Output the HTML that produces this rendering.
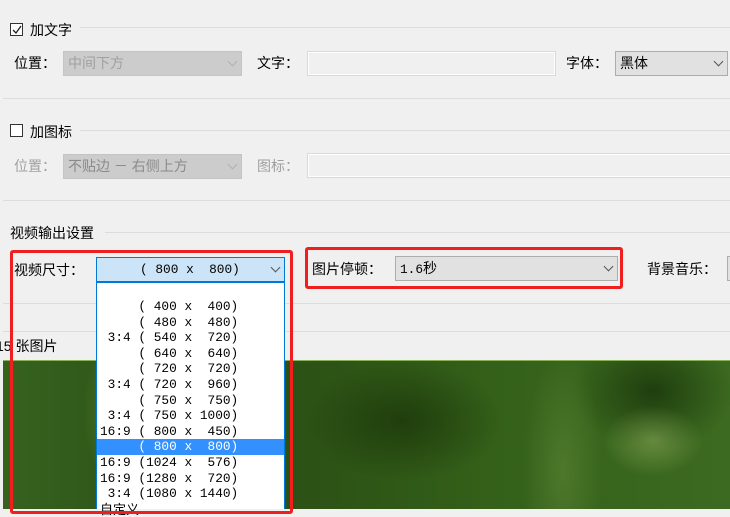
<!DOCTYPE html>
<html><head><meta charset="utf-8"><style>
*{margin:0;padding:0;box-sizing:border-box}
body{width:730px;height:509px;overflow:hidden;background:#f0f0f0;position:relative;font-family:"Liberation Sans","Noto Sans CJK SC",sans-serif;font-size:14px;color:#000}
.a{position:absolute}
.hl{position:absolute;height:1px;background:#dcdcdc}
.lbl{position:absolute;line-height:16px;white-space:nowrap}
.dis{color:#a0a0a0}
.cb{position:absolute;width:13px;height:13px;border:1px solid #333;background:#fff}
.combo{position:absolute;border:1px solid #adadad;background:#e1e1e1;line-height:23px;padding-left:4px;white-space:nowrap}
.arr{position:absolute;right:5px;width:7px;height:7px;border-right:1px solid #555;border-bottom:1px solid #555;transform:rotate(45deg);top:6px}
.mono{font-family:"Liberation Mono","Noto Sans CJK SC",monospace;font-size:12.8px}
.list div{height:15.6px;line-height:15.6px;white-space:pre;padding-left:3px}
</style></head><body>
<div class="hl" style="left:80px;top:27px;width:650px"></div>
<div class="cb" style="left:10px;top:23px"></div>
<svg class="a" style="left:10px;top:23px" width="14" height="14"><path d="M3 7 L6 10 L11 3" stroke="#222" stroke-width="1.3" fill="none"/></svg>
<div class="lbl" style="left:30px;top:22px">加文字</div>
<div class="lbl" style="left:14px;top:55px">位置：</div>
<div class="combo dis" style="left:63px;top:51px;width:179px;height:25px;background:#cccccc;border-color:#c4c4c4">中间下方<span class="arr" style="border-color:#b0b0b0"></span></div>
<div class="lbl" style="left:257px;top:55px">文字：</div>
<div class="a" style="left:307px;top:51px;width:249px;height:25px;border:1px solid #d9d9d9;background:#f0f0f0;box-shadow:inset 0 0 0 1px #fff"></div>
<div class="lbl" style="left:566px;top:55px">字体：</div>
<div class="combo" style="left:615px;top:51px;width:113px;height:25px">黑体<span class="arr"></span></div>
<div class="hl" style="left:3px;top:98px;width:727px"></div>
<div class="hl" style="left:80px;top:130px;width:650px"></div>
<div class="cb" style="left:10px;top:124px"></div>
<div class="lbl" style="left:30px;top:124px">加图标</div>
<div class="lbl dis" style="left:14px;top:158px">位置：</div>
<div class="combo dis" style="left:63px;top:154px;width:179px;height:25px;background:#cccccc;border-color:#c4c4c4;color:#8a8a8a">不贴边 － 右侧上方<span class="arr" style="border-color:#b0b0b0"></span></div>
<div class="lbl dis" style="left:257px;top:158px">图标：</div>
<div class="a" style="left:307px;top:153px;width:430px;height:25px;border:1px solid #d9d9d9;background:#f0f0f0;box-shadow:inset 0 0 0 1px #fff"></div>
<div class="hl" style="left:3px;top:200px;width:727px"></div>
<div class="hl" style="left:105px;top:232px;width:625px"></div>
<div class="lbl" style="left:10px;top:225px">视频输出设置</div>
<div class="lbl" style="left:14px;top:262px">视频尺寸：</div>
<div class="combo mono" style="left:96px;top:257px;width:189px;height:25px;background:#cce4f7;border-color:#0078d7;padding-left:0"><span style="white-space:pre;position:absolute;left:43px">( 800 x  800)</span><span class="arr"></span></div>
<div class="lbl" style="left:312px;top:261px">图片停顿：</div>
<div class="combo mono" style="left:395px;top:256px;width:223px;height:25px">1.6<span style="font-family:'Liberation Sans','Noto Sans CJK SC',sans-serif;font-size:14px">秒</span><span class="arr"></span></div>
<div class="lbl" style="left:647px;top:261px">背景音乐：</div>
<div class="combo" style="left:727px;top:256px;width:20px;height:25px"></div>
<div class="hl" style="left:3px;top:303px;width:727px"></div>
<div class="hl" style="left:3px;top:331px;width:727px"></div>
<div class="lbl" style="left:-4px;top:338px">15 张图片</div>
<div class="a" style="left:3px;top:360px;width:727px;height:149px;background:
radial-gradient(ellipse 50px 35px at 650px 80px,rgba(140,170,90,.55),transparent),
radial-gradient(ellipse 40px 120px at 560px 110px,rgba(100,140,60,.5),transparent),
radial-gradient(ellipse 40px 80px at 120px 50px,rgba(110,140,50,.6),transparent),
radial-gradient(ellipse 100px 60px at 400px 60px,rgba(25,50,8,.7),transparent),
radial-gradient(ellipse 80px 60px at 650px 30px,rgba(20,45,8,.7),transparent),
linear-gradient(90deg,#36621e,#2a4e14 30%,#2e5616 50%,#35621a 70%,#3c6a20);border-top:1px solid #8ab05a"></div>
<div class="a mono list" style="left:96px;top:282px;width:189px;height:227px;background:#fff;border:1px solid #0078d7;border-bottom:none;padding-top:16px">
<div>     ( 400 x  400)</div><div>     ( 480 x  480)</div><div> 3:4 ( 540 x  720)</div><div>     ( 640 x  640)</div><div>     ( 720 x  720)</div><div> 3:4 ( 720 x  960)</div><div>     ( 750 x  750)</div><div> 3:4 ( 750 x 1000)</div><div>16:9 ( 800 x  450)</div><div style="background:#3390ff;color:#fff">     ( 800 x  800)</div><div>16:9 (1024 x  576)</div><div>16:9 (1280 x  720)</div><div> 3:4 (1080 x 1440)</div><div style="font-family:'Liberation Sans','Noto Sans CJK SC',sans-serif;font-size:13px">自定义</div>
</div>
<div class="a" style="left:10px;top:250px;width:283px;height:264px;border:3px solid #f01e1e;border-radius:3px"></div>
<div class="a" style="left:305px;top:247px;width:318px;height:42px;border:3px solid #f01e1e;border-radius:3px"></div>
</body></html>
